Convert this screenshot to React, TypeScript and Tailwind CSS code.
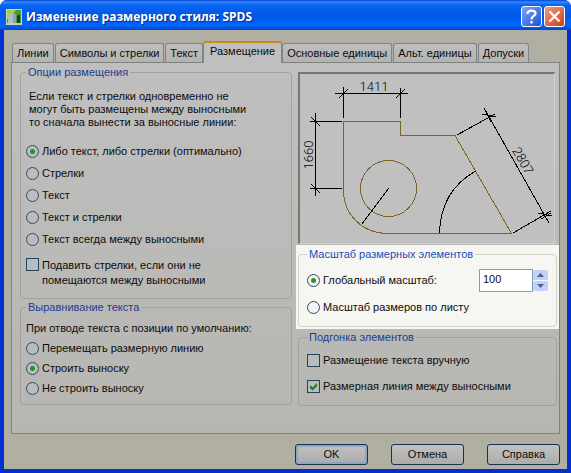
import { useState } from 'react'
import type { ReactNode } from 'react'

const tabs = [
  'Линии',
  'Символы и стрелки',
  'Текст',
  'Размещение',
  'Основные единицы',
  'Альт. единицы',
  'Допуски',
]

const fitOptions = [
  'Либо текст, либо стрелки (оптимально)',
  'Стрелки',
  'Текст',
  'Текст и стрелки',
  'Текст всегда между выносными',
]

const alignOptions = ['Перемещать размерную линию', 'Строить выноску', 'Не строить выноску']

type GroupProps = {
  title: string
  bright?: boolean
  className: string
  children: ReactNode
}

function Group({ title, bright, className, children }: GroupProps) {
  return (
    <fieldset
      className={[
        'min-w-0 rounded-[4px] border',
        bright ? 'border-[#d3d2c8]' : 'border-[#a2a29b]',
        className,
      ].join(' ')}
    >
      <legend
        className={['px-[2px] leading-4', bright ? 'text-[#1c4dbb]' : 'text-[#1d3c8f]'].join(' ')}
      >
        {title}
      </legend>
      {children}
    </fieldset>
  )
}

type RadioProps = {
  name: string
  label: string
  checked: boolean
  bright?: boolean
  className: string
  onChange: () => void
}

function Radio({ name, label, checked, bright, className, onChange }: RadioProps) {
  return (
    <label className={['flex items-center gap-[3px]', className].join(' ')}>
      <input
        type="radio"
        name={name}
        checked={checked}
        onChange={onChange}
        className={[
          'size-[13px] shrink-0 appearance-none rounded-full border border-[#2b4b6b] checked:bg-[radial-gradient(circle,#1f8a1f_0,#2c962c_2px,transparent_3px)]',
          bright ? 'bg-[#f3f5f4]' : 'bg-[#b9bdbd]',
        ].join(' ')}
      />
      <span>{label}</span>
    </label>
  )
}

type CheckProps = {
  checked: boolean
  className: string
  onChange: () => void
  children: ReactNode
}

function Check({ checked, className, onChange, children }: CheckProps) {
  return (
    <label className={['flex gap-[3px]', className].join(' ')}>
      <span className="relative size-[13px] shrink-0">
        <input
          type="checkbox"
          checked={checked}
          onChange={onChange}
          className="block size-[13px] appearance-none border border-[#23445f] bg-[#b9bcbc]"
        />
        {checked && (
          <svg viewBox="0 0 13 13" className="pointer-events-none absolute inset-0 size-[13px]">
            <path d="M3 5v3l2.500 2.500L10 6V3L5.500 7.500z" fill="#1c7a1c" />
          </svg>
        )}
      </span>
      <span>{children}</span>
    </label>
  )
}

function Preview() {
  return (
    <div className="mr-1 ml-[2px] h-[172px] border-t-2 border-r border-b border-l-2 border-[#77776f] border-r-[#d0d0cc] border-b-[#d0d0cc] bg-[#c0c0c0]">
      <svg viewBox="300 74 254 169" className="h-full w-full" fill="none" shapeRendering="crispEdges">
        <g stroke="#7d661c">
          <path d="M343.500 191V121.500h57v14h54.500L511.500 233.500H388C362 233.500 343.500 214 343.500 191" />
          <circle cx="388.500" cy="188.500" r="28" />
        </g>
        <g stroke="#000">
          <path d="M335 93.500h73M343.500 87v31M400.500 88v30M339 98l9-9M396 98l9-9" />
          <path d="M315.500 113v83M310 121.500h32M310 188.500h32M311 117l9 9M311 184l9 9" />
          <path d="M457 135L495 114M484 108L549 223M513 233L551 211M482 114l14 3M485 110l6 12M538 213l14 3M541 219l10-6" />
          <path d="M361.500 224.500L388.500 188.500M439.500 233.500C440 205 453 184 475.500 171" />
        </g>
        <g fill="#000" fontFamily="Roboto, 'Liberation Sans', sans-serif" fontWeight="300" fontSize="13" textAnchor="middle">
          <text x="374" y="91">1411</text>
          <text transform="translate(313 155) rotate(-90)">1660</text>
          <text transform="translate(519 163) rotate(60)">2807</text>
        </g>
      </svg>
    </div>
  )
}

const dialogButton =
  'h-[21px] w-[73px] rounded-[3px] border border-[#16324c] bg-linear-to-b from-[#c2c2c2] to-[#acaca9]'

export default function App() {
  const [tab, setTab] = useState('Размещение')
  const [fit, setFit] = useState(0)
  const [align, setAlign] = useState(1)
  const [scaleMode, setScaleMode] = useState('global')
  const [scale, setScale] = useState(100)
  const [suppress, setSuppress] = useState(false)
  const [manual, setManual] = useState(false)
  const [between, setBetween] = useState(true)

  return (
    <div className="flex min-h-screen flex-col overflow-hidden rounded-t-[7px] bg-[#0030d0] font-['Liberation_Sans',sans-serif] text-[11px] text-[#0c0c0c]">
      <header className="flex h-[30px] items-center bg-[linear-gradient(#0a3fd0_0,#2f8bff_2px,#0a63f0_5px,#0058e8_16px,#0066ff_25px,#0047d0_30px)] pt-[3px] pr-[6px] pl-[6px]">
        <svg viewBox="0 0 16 16" className="size-4" aria-hidden="true">
          <path d="M0 0h16v16H0z" fill="#c9d8a0" />
          <path d="M1 1h14v14H1z" fill="#4d9a2e" />
          <path d="M1 1h9L3 10H1z" fill="#a6d23c" />
          <path d="M2 8l5-5 3 3v9H2z" fill="#aebcc4" />
          <path d="M7 3l3 3v9H7z" fill="#8ba3ae" />
          <path d="M11 7l2-2 1 2v7h-3z" fill="#17384a" />
          <path d="M1 14h14v1H1z" fill="#c8cfc0" />
        </svg>
        <h1 className="ml-1 flex-1 font-['Open_Sans',sans-serif] text-[12px] font-bold text-white [text-shadow:1px_1px_1px_#0a2a80]">
          Изменение размерного стиля: SPDS
        </h1>
        <div className="flex gap-[2px]">
          <button
            type="button"
            aria-label="Справка"
            className="flex size-[21px] items-center justify-center rounded-[3px] border border-white bg-linear-to-br from-[#7ea4f8] to-[#1d4fd8]"
          >
            <svg viewBox="0 0 21 21" className="size-[21px] shrink-0" fill="none" stroke="#fff" strokeWidth="2.200">
              <path d="M6.500 8C6.500 3.500 14.500 3.500 14.500 7.500C14.500 10 10.500 10 10.500 13.500M10.500 15v2.500" />
            </svg>
          </button>
          <button
            type="button"
            aria-label="Закрыть"
            className="flex size-[21px] items-center justify-center rounded-[3px] border border-white bg-linear-to-br from-[#f09a80] to-[#cc3a12]"
          >
            <svg viewBox="0 0 21 21" className="size-[21px] shrink-0" stroke="#fff" strokeWidth="2.400">
              <path d="M5.500 5.500l10 10M15.500 5.500l-10 10" />
            </svg>
          </button>
        </div>
      </header>

      <main className="mx-1 mb-1 flex flex-1 flex-col bg-[#b1afa1] px-[7px] pt-[11px] pb-1">
        <div role="tablist" className="ml-px flex items-end gap-px">
          {tabs.map((name) => {
            const isActive = name === tab

            return (
              <button
                key={name}
                type="button"
                role="tab"
                aria-selected={isActive}
                onClick={() => setTab(name)}
                className={[
                  'rounded-t-[3px] border border-b-0 whitespace-nowrap',
                  isActive
                    ? 'z-10 -mx-px -mb-px h-[22px] border-[#7f8685] border-t-2 border-t-[#c48a1c] bg-[#bfbfc0] px-[6px] pb-[3px]'
                    : 'h-[19px] border-[#7f8685] bg-linear-to-b from-[#bfbfbf] to-[#b3b3b0] px-1',
                ].join(' ')}
              >
                {name}
              </button>
            )
          })}
        </div>

        <div className="grid grid-cols-[272fr_263fr] gap-x-1 border border-[#7f8280] bg-linear-to-b from-[#bfbfc0] to-[#b7b6b1] pb-[27px] pl-2">
          <div>
            <Group title="Опции размещения" className="mt-px pr-2 pb-[10px] pl-[5px]">
              <p className="mt-[10px] pl-[3px] leading-[13px]">
                Если текст и стрелки одновременно не
                <br />
                могут быть размещены между выносными
                <br />
                то сначала вынести за выносные линии:
              </p>
              <div className="mt-[11px]">
                {fitOptions.map((label, i) => (
                  <Radio
                    key={label}
                    name="fit"
                    label={label}
                    checked={fit === i}
                    onChange={() => setFit(i)}
                    className="h-[22px]"
                  />
                ))}
              </div>
              <Check
                checked={suppress}
                onChange={() => setSuppress(!suppress)}
                className="mt-2 leading-[15px]"
              >
                Подавить стрелки, если они не
                <br />
                помещаются между выносными
              </Check>
            </Group>

            <Group title="Выравнивание текста" className="pr-2 pb-[6px] pl-[5px]">
              <p className="mt-[6px] leading-[14px]">При отводе текста с позиции по умолчанию:</p>
              <div className="mt-[3px]">
                {alignOptions.map((label, i) => (
                  <Radio
                    key={label}
                    name="align"
                    label={label}
                    checked={align === i}
                    onChange={() => setAlign(i)}
                    className="h-5"
                  />
                ))}
              </div>
            </Group>
          </div>

          <div className="pt-[9px]">
            <Preview />
            <div className="mt-px bg-[#f6f6f2] px-[2px] pt-px pb-[2px]">
              <Group title="Масштаб размерных элементов" bright className="pr-2 pb-2 pl-2">
                <div className="mt-[7px] flex h-[23px] items-center justify-between">
                  <Radio
                    name="scale"
                    label="Глобальный масштаб:"
                    bright
                    checked={scaleMode === 'global'}
                    onChange={() => setScaleMode('global')}
                    className="h-[23px]"
                  />
                  <div className="flex items-center">
                    <input
                      type="text"
                      aria-label="Глобальный масштаб"
                      value={scale}
                      onChange={(e) => setScale(Number(e.target.value) || 0)}
                      className="h-[23px] w-[54px] border border-[#7f9db9] bg-white px-[3px] pb-[3px]"
                    />
                    <div className="flex w-[15px] flex-col gap-px">
                      <button
                        type="button"
                        aria-label="Больше"
                        onClick={() => setScale(scale + 1)}
                        className="flex h-[10px] items-center justify-center rounded-[2px] bg-[#c2d1fb]"
                      >
                        <svg viewBox="0 0 7 4" className="h-1 w-[7px]">
                          <path d="M0 4L3.500 0L7 4z" fill="#4d6185" />
                        </svg>
                      </button>
                      <button
                        type="button"
                        aria-label="Меньше"
                        onClick={() => setScale(scale - 1)}
                        className="flex h-[10px] items-center justify-center rounded-[2px] bg-[#c2d1fb]"
                      >
                        <svg viewBox="0 0 7 4" className="h-1 w-[7px]">
                          <path d="M0 0h7L3.500 4z" fill="#4d6185" />
                        </svg>
                      </button>
                    </div>
                  </div>
                </div>
                <Radio
                  name="scale"
                  label="Масштаб размеров по листу"
                  bright
                  checked={scaleMode === 'sheet'}
                  onChange={() => setScaleMode('sheet')}
                  className="mt-1 h-[22px]"
                />
              </Group>
            </div>
            <div className="px-[2px]">
              <Group title="Подгонка элементов" className="pr-2 pb-[6px] pl-2">
                <Check
                  checked={manual}
                  onChange={() => setManual(!manual)}
                  className="mt-[2px] h-[26px] items-center"
                >
                  Размещение текста вручную
                </Check>
                <Check
                  checked={between}
                  onChange={() => setBetween(!between)}
                  className="h-[26px] items-center"
                >
                  Размерная линия между выносными
                </Check>
              </Group>
            </div>
          </div>
        </div>

        <footer className="mt-auto flex justify-end gap-[23px]">
          <button
            type="button"
            className={`${dialogButton} shadow-[inset_0_0_0_2px_#8fa3c4]`}
          >
            OK
          </button>
          <button type="button" className={dialogButton}>
            Отмена
          </button>
          <button type="button" className={dialogButton}>
            Справка
          </button>
        </footer>
      </main>
    </div>
  )
}
